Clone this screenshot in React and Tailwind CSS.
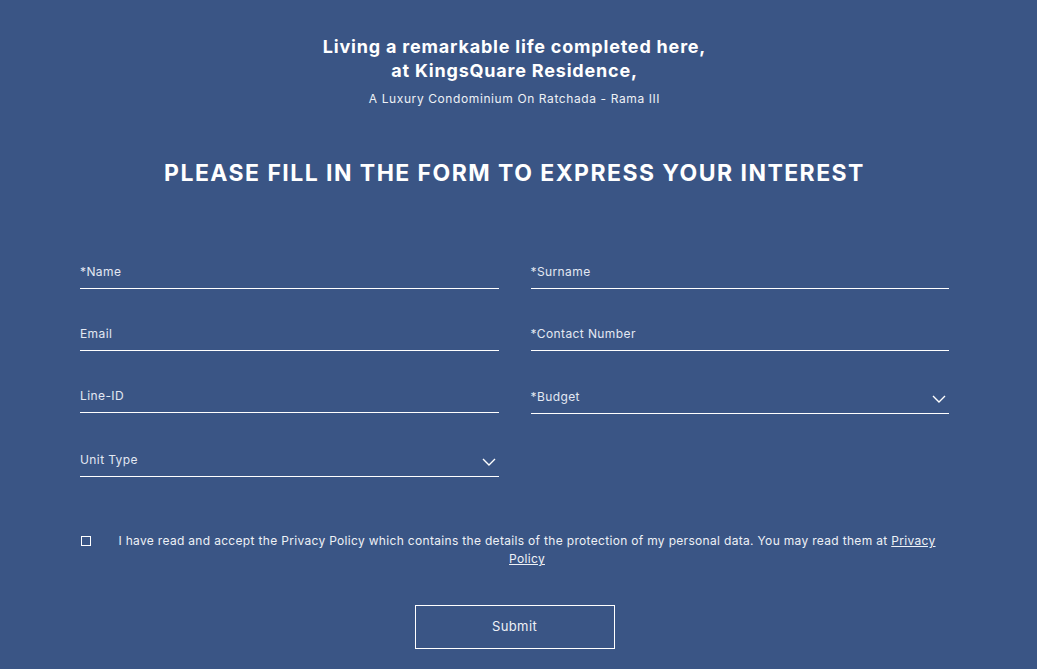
import React from "react";

function Chevron() {
  return (
    <svg width="14" height="8" viewBox="0 0 14 8" fill="none" className="mb-[2px] mr-[3px]">
      <path d="M1 1l6 6 6-6" stroke="white" strokeWidth="1.4" />
    </svg>
  );
}

function Field({ label, select, tall }) {
  return (
    <div className={`flex items-end justify-between border-b border-white pb-[8px] ${tall ? "h-[40px]" : "h-[39px]"}`}>
      <span className="text-[12px] text-[#e3e8f2] leading-[16px] tracking-[0.4px]">{label}</span>
      {select && <Chevron />}
    </div>
  );
}

export default function App() {
  return (
    <div
      className="w-[1037px] h-[669px] bg-[#3a5585] text-white flex flex-col items-center overflow-hidden pr-[8px]"
      style={{ fontFamily: "Inter, 'Open Sans', sans-serif" }}
    >
      <div className="mt-[35px] text-center font-bold text-[18px] leading-[24px] tracking-[0.8px]">
        <div>Living a remarkable life completed here,</div>
        <div>at KingsQuare Residence,</div>
      </div>
      <div className="mt-[9px] text-[12px] leading-[14px] text-[#eef1f6] tracking-[0.6px]">
        A Luxury Condominium On Ratchada - Rama III
      </div>
      <h1 className="mt-[52px] font-bold text-[23px] leading-[30px] tracking-[1.45px]">
        PLEASE FILL IN THE FORM TO EXPRESS YOUR INTEREST
      </h1>

      <div className="mt-[62px] w-[869px] grid grid-cols-2 gap-x-[32px] gap-y-[23px]">
        <Field label="*Name" />
        <Field label="*Surname" />
        <Field label="Email" />
        <Field label="*Contact Number" />
        <Field label="Line-ID" />
        <Field label="*Budget" select tall />
        <Field label="Unit Type" select tall />
      </div>

      <div className="mt-[55px] w-[869px] flex items-start">
        <div className="w-[10px] h-[10px] border border-white mt-[4px] ml-[1px] shrink-0" />
        <p className="ml-[26px] text-center text-[12px] leading-[18px] text-[#eef1f6] w-[820px] tracking-[0.32px]">
          I have read and accept the Privacy Policy which contains the details of the protection of my personal data. You may read them at{" "}
          <span className="underline">Privacy Policy</span>
        </p>
      </div>

      <button className="mt-[37px] w-[200px] h-[44px] border border-white text-[13px] text-[#eef1f6] tracking-[0.4px]">
        Submit
      </button>
    </div>
  );
}
